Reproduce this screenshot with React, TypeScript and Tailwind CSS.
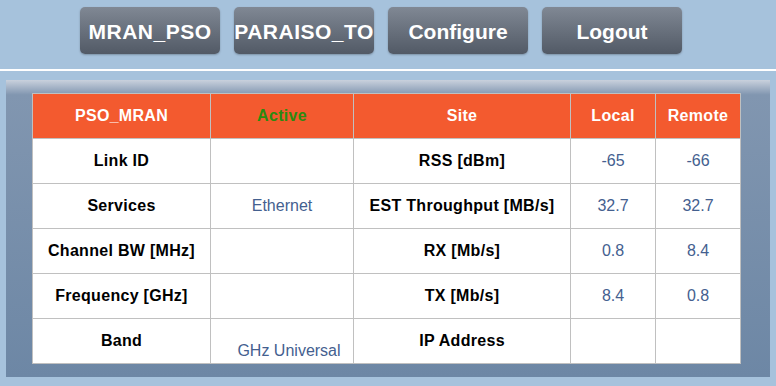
import React from 'react'

const buttons = [
  { name: 'MRAN_PSO', wide: true },
  { name: 'PARAISO_TO', wide: true },
  { name: 'Configure', wide: false },
  { name: 'Logout', wide: false },
]

const rows = [
  { label: 'Link ID', mid: '', site: 'RSS [dBm]', local: '-65', remote: '-66' },
  { label: 'Services', mid: 'Ethernet', site: 'EST Throughput [MB/s]', local: '32.7', remote: '32.7' },
  { label: 'Channel BW [MHz]', mid: '', site: 'RX [Mb/s]', local: '0.8', remote: '8.4' },
  { label: 'Frequency [GHz]', mid: '', site: 'TX [Mb/s]', local: '8.4', remote: '0.8' },
  { label: 'Band', mid: 'GHz Universal', site: 'IP Address', local: '', remote: '', low: true },
]

const App = () => {
  return (
    <div className="w-[776px] h-[386px] bg-[#a6c2dc] overflow-hidden" style={{ fontFamily: '"Liberation Sans", Arial, sans-serif' }}>
      <div className="flex gap-[14px] pl-[80px] pt-[7px] h-[69px]">
        {buttons.map((b) => (
          <div
            key={b.name}
            className={`w-[140px] h-[47px] rounded-[5px] bg-gradient-to-b from-[#808894] to-[#525a66] shadow-[0_1px_2px_rgba(0,0,0,0.25)] flex justify-center items-center pt-[2px] text-white font-bold text-[21px] whitespace-nowrap ${b.wide ? 'tracking-[0.5px]' : ''}`}
          >
            <span>{b.name}</span>
          </div>
        ))}
      </div>
      <div className="h-[2px] bg-white" />
      <div className="mx-[6px] mt-[9px] h-[297px] bg-gradient-to-b from-[#c9d1dd] via-[#8196b0] via-[5%] to-[#6d87a5] pl-[26px] pt-[13px]">
        <table className="border-collapse text-[16px] text-center">
          <colgroup>
            <col className="w-[178px]" />
            <col className="w-[143px]" />
            <col className="w-[217px]" />
            <col className="w-[85px]" />
            <col className="w-[85px]" />
          </colgroup>
          <thead>
            <tr className="h-[45px] bg-[#f35a2f] font-bold tracking-[0.3px]">
              <th className="border border-[#c0c0c0] text-white">PSO_MRAN</th>
              <th className="border border-[#c0c0c0] text-[#2a8a10]">Active</th>
              <th className="border border-[#c0c0c0] text-white">Site</th>
              <th className="border border-[#c0c0c0] text-white">Local</th>
              <th className="border border-[#c0c0c0] text-white">Remote</th>
            </tr>
          </thead>
          <tbody className="bg-white">
            {rows.map((r) => (
              <tr key={r.label} className="h-[45px]">
                <td className="border border-[#c0c0c0] font-bold text-black tracking-[0.3px]">{r.label}</td>
                <td className={`border border-[#c0c0c0] text-[#44608f] ${r.low ? 'pt-[19px] pl-[14px]' : ''}`}>{r.mid}</td>
                <td className="border border-[#c0c0c0] font-bold text-black tracking-[0.3px]">{r.site}</td>
                <td className="border border-[#c0c0c0] text-[#44608f]">{r.local}</td>
                <td className="border border-[#c0c0c0] text-[#44608f]">{r.remote}</td>
              </tr>
            ))}
          </tbody>
        </table>
      </div>
    </div>
  )
}

export default App
